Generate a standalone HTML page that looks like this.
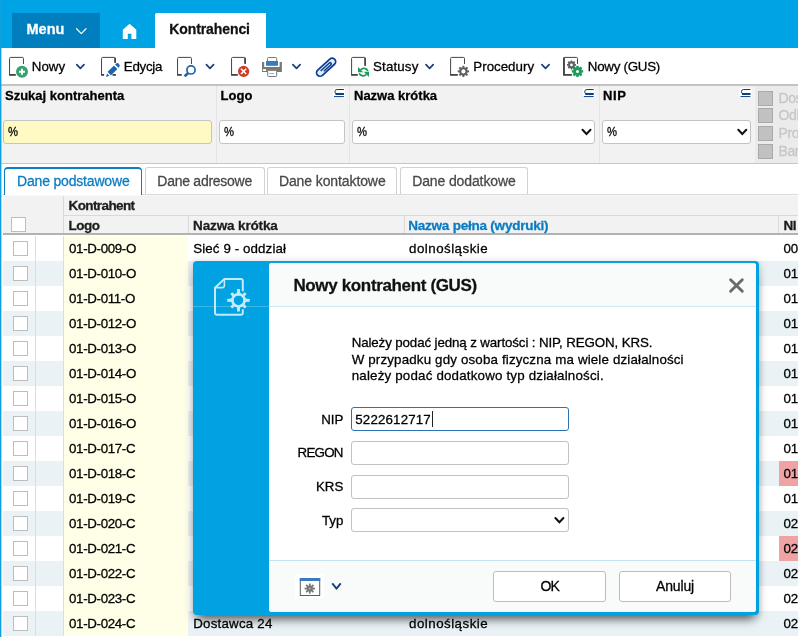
<!DOCTYPE html>
<html>
<head>
<meta charset="utf-8">
<title>Kontrahenci</title>
<style>
html,body{margin:0;padding:0;}
body{width:798px;height:637px;overflow:hidden;background:#fff;font-family:"Liberation Sans",sans-serif;font-size:13.33px;color:#000;position:relative;}
*{box-sizing:border-box;}
#wrap{position:absolute;left:0;top:0;width:798px;height:637px;overflow:hidden;will-change:transform;}
.abs{position:absolute;}
.t{position:absolute;white-space:nowrap;line-height:1;-webkit-text-stroke:0.28px currentColor;}
svg{position:absolute;overflow:visible;}
/* top bar */
#topbar{left:0;top:0;width:798px;height:47.5px;background:#00a3e3;}
#leftedge{left:0;top:0;width:2px;height:637px;background:linear-gradient(90deg,#10a0e0 0,#10a0e0 1px,rgba(16,160,224,0.4) 1px,rgba(16,160,224,0.4) 2px);}
#menu{left:12px;top:13px;width:88px;height:34.5px;background:#007ebe;}
#tab{left:155px;top:13px;width:110.5px;height:35px;background:#fff;border-radius:2px 0 0 0;}
.tl{font-size:13.33px;top:60.3px;color:#000;}
/* toolbar */
#tbline{left:1px;top:84px;width:797px;height:2px;background:#c3c3c3;}
/* filter */
#filter{left:1px;top:86px;width:797px;height:77px;background:#f2f2f2;}
#filterR{left:755.3px;top:86px;width:43px;height:77px;background:#ebebeb;}
#filterline{left:1px;top:163px;width:797px;height:1px;background:#c6c6c6;}
.fsep{position:absolute;top:86px;width:1px;height:77px;background:#e4e4e4;}
.finp{position:absolute;top:120px;height:24px;border:1px solid #c4c4c4;border-radius:3px;background:#fff;}
.flab{font-weight:bold;font-size:13px;top:88.8px;color:#000;}
.fval{font-size:12.5px;top:126px;color:#000;transform:scaleX(0.9);transform-origin:0 0;}
.gcb{position:absolute;left:758px;width:15px;height:14.8px;background:#c1c1c1;border:1px solid #a9a9a9;}
.glab{font-size:14px;color:#c6c6c6;left:778.5px;letter-spacing:-0.4px;}
/* tabs */
.tb{position:absolute;top:167px;height:27px;border:1px solid #d2d2d2;border-bottom:none;border-radius:3px 3px 0 0;background:#fff;}
.tbt{font-size:14px;top:174.3px;color:#484848;}
#tabline{left:3px;top:194px;width:795px;height:1px;background:#d9d9d9;}
#tabline2{left:3px;top:195px;width:795px;height:1px;background:#f8f8f8;}
/* table */
#thead{left:3px;top:196px;width:795px;height:37.2px;background:#f2f2f2;}
#theadline{left:3px;top:233px;width:795px;height:1.8px;background:#b2b2b2;}
.th{font-weight:bold;font-size:13.5px;color:#1c1c1c;}
.hs{position:absolute;width:1px;background:#d9d9d9;}
.row{position:absolute;left:3px;width:795px;height:25px;}
.row.alt{background:#eaf2f6;}
.cb{position:absolute;width:15px;height:15px;border:1px solid #bdbdbd;background:#fff;}
.vs{position:absolute;top:0;width:1px;height:25px;background:#cfe0f2;}
.ylw{position:absolute;left:61px;top:0;width:124px;height:25px;background:#fffee6;}
.pink{position:absolute;left:775.6px;top:0;width:20px;height:25px;background:#f0a3a5;}
.c{position:absolute;white-space:nowrap;line-height:1;-webkit-text-stroke:0.28px currentColor;top:6.3px;font-size:13.33px;color:#000;}
/* dialog */
#dlg{left:193px;top:260.5px;width:565.7px;height:354.3px;background:#00a2e1;border-radius:4px;box-shadow:0 2px 9px 0 rgba(0,0,0,0.26),0 9px 10px -5px rgba(0,0,0,0.55);}
#dlgin{left:75.5px;top:2px;width:487.4px;height:349.2px;background:#fff;border-radius:3px;overflow:hidden;}
#dtitle{left:0;top:0;width:100%;height:43.2px;background:#f9fbfb;}
#dtline{left:0;top:45px;width:563px;height:1px;background:rgba(255,255,255,0.22);}
#dtline2{left:0;top:43px;width:100%;height:1px;background:#bfe0f2;}
#dfoot{left:0;bottom:0;width:100%;height:51.5px;background:#f9fbfb;border-top:1px solid #c4e2f2;}
.dinp{position:absolute;left:82.3px;width:218.2px;height:24px;border:1px solid #c2c2c2;border-radius:3px;background:#fff;}
.dlab{font-size:13.33px;color:#000;}
.dtx{font-size:13.33px;color:#000;left:83.2px;}
.btn{position:absolute;top:308.5px;width:112.4px;height:30.5px;border:1px solid #bcbcbc;border-radius:3px;background:#fff;}

</style>
</head>
<body>
<div id="wrap">
<div class="abs" id="topbar"></div>
<div class="abs" id="menu"></div>
<div class="abs" id="tab"></div>
<div class="t" style="left:26.5px;top:22px;font-size:14.5px;font-weight:bold;color:#fff;letter-spacing:0px">Menu</div>
<div class="t" style="left:169.3px;top:22.4px;font-size:14px;font-weight:bold;color:#111;letter-spacing:-0.1px">Kontrahenci</div>

<div class="t tl" style="left:31.8px;">Nowy</div>
<div class="t tl" style="left:123.8px;letter-spacing:-0.28px">Edycja</div>
<div class="t tl" style="left:373px;letter-spacing:0.15px">Statusy</div>
<div class="t tl" style="left:473.3px;">Procedury</div>
<div class="t tl" style="left:587.8px;letter-spacing:-0.26px">Nowy (GUS)</div>
<div class="abs" id="tbline"></div>

<div class="abs" id="filter"></div>
<div class="abs" id="filterR"></div>
<div class="fsep" style="left:216.3px"></div>
<div class="fsep" style="left:349.4px"></div>
<div class="fsep" style="left:598.8px"></div>
<div class="abs" id="filterline"></div>
<div class="t flab" style="left:5px;">Szukaj kontrahenta</div>
<div class="t flab" style="left:220.6px;">Logo</div>
<div class="t flab" style="left:354px;">Nazwa krótka</div>
<div class="t flab" style="left:603px;letter-spacing:0.6px">NIP</div>
<div class="finp" style="left:3.4px;width:209px;background:#fff9c4;"></div>
<div class="finp" style="left:219.2px;width:125.5px;"></div>
<div class="finp" style="left:352px;width:243px;"></div>
<div class="finp" style="left:602.4px;width:149px;"></div>
<div class="t fval" style="left:8px;">%</div>
<div class="t fval" style="left:223.6px;">%</div>
<div class="t fval" style="left:356.5px;">%</div>
<div class="t fval" style="left:606.8px;">%</div>
<div class="gcb" style="top:91px"></div>
<div class="gcb" style="top:108px"></div>
<div class="gcb" style="top:126.2px"></div>
<div class="gcb" style="top:144px"></div>
<div class="t glab" style="top:90.5px">Dos</div>
<div class="t glab" style="top:108.2px">Odl</div>
<div class="t glab" style="top:126px">Pro</div>
<div class="t glab" style="top:143.8px">Bar</div>

<div class="abs" id="tabline"></div>
<div class="abs" id="tabline2"></div>
<div class="tb" style="left:4px;width:138px;top:167px;height:28px;border:1px solid #0c7ec4;border-top:2px solid #0c7ec4;border-bottom:none;border-radius:4px 4px 0 0;"></div>
<div class="tb" style="left:145px;width:120px;"></div>
<div class="tb" style="left:267px;width:130px;"></div>
<div class="tb" style="left:400px;width:128px;"></div>
<div class="t tbt" style="left:17px;color:#0b7cc2;letter-spacing:-0.18px">Dane podstawowe</div>
<div class="t tbt" style="left:157.3px;letter-spacing:-0.26px">Dane adresowe</div>
<div class="t tbt" style="left:278.9px;letter-spacing:-0.1px">Dane kontaktowe</div>
<div class="t tbt" style="left:412.2px;letter-spacing:-0.12px">Dane dodatkowe</div>

<div class="abs" id="thead"></div>
<div class="abs" id="theadline"></div>
<div class="hs" style="left:63px;top:196px;height:37px"></div>
<div class="hs" style="left:63px;top:215.3px;width:735px;height:1px"></div>
<div class="hs" style="left:188px;top:216px;height:17px"></div>
<div class="hs" style="left:403.5px;top:216px;height:17px"></div>
<div class="hs" style="left:778px;top:216px;height:17px"></div>
<div class="cb" style="left:11px;top:216.8px;"></div>
<div class="t th" style="left:68.5px;top:198.9px;letter-spacing:-0.6px">Kontrahent</div>
<div class="t th" style="left:68.6px;top:218.7px;letter-spacing:-0.55px">Logo</div>
<div class="t th" style="left:193.1px;top:218.7px;letter-spacing:-0.14px">Nazwa krótka</div>
<div class="t th" style="left:408.2px;top:218.7px;letter-spacing:-0.22px;color:#0b7cc2">Nazwa pełna (wydruki)</div>
<div class="t th" style="left:783.4px;top:218.7px;letter-spacing:-0.3px">NI</div>

<div id="rows">
<div class="row" style="top:235.7px"><div class="cb" style="left:10.2px;top:5.2px"></div><div class="vs" style="left:32px"></div><div class="vs" style="left:60px"></div><div class="ylw"></div><div class="c" style="left:66px;letter-spacing:-0.34px">01-D-009-O</div><div class="c" style="left:190.3px;letter-spacing:0.1px">Sieć 9 - oddział</div><div class="c" style="left:406.1px;letter-spacing:0.47px">dolnośląskie</div><div class="c" style="left:780.6px;letter-spacing:-0.3px">00</div></div>
<div class="row alt" style="top:260.7px"><div class="cb" style="left:10.2px;top:5.2px"></div><div class="vs" style="left:32px"></div><div class="vs" style="left:60px"></div><div class="ylw"></div><div class="c" style="left:66px;letter-spacing:-0.34px">01-D-010-O</div><div class="c" style="left:780.6px;letter-spacing:-0.3px">01</div></div>
<div class="row" style="top:285.7px"><div class="cb" style="left:10.2px;top:5.2px"></div><div class="vs" style="left:32px"></div><div class="vs" style="left:60px"></div><div class="ylw"></div><div class="c" style="left:66px;letter-spacing:-0.34px">01-D-011-O</div><div class="c" style="left:780.6px;letter-spacing:-0.3px">01</div></div>
<div class="row alt" style="top:310.7px"><div class="cb" style="left:10.2px;top:5.2px"></div><div class="vs" style="left:32px"></div><div class="vs" style="left:60px"></div><div class="ylw"></div><div class="c" style="left:66px;letter-spacing:-0.34px">01-D-012-O</div><div class="c" style="left:780.6px;letter-spacing:-0.3px">01</div></div>
<div class="row" style="top:335.7px"><div class="cb" style="left:10.2px;top:5.2px"></div><div class="vs" style="left:32px"></div><div class="vs" style="left:60px"></div><div class="ylw"></div><div class="c" style="left:66px;letter-spacing:-0.34px">01-D-013-O</div><div class="c" style="left:780.6px;letter-spacing:-0.3px">01</div></div>
<div class="row alt" style="top:360.7px"><div class="cb" style="left:10.2px;top:5.2px"></div><div class="vs" style="left:32px"></div><div class="vs" style="left:60px"></div><div class="ylw"></div><div class="c" style="left:66px;letter-spacing:-0.34px">01-D-014-O</div><div class="c" style="left:780.6px;letter-spacing:-0.3px">01</div></div>
<div class="row" style="top:385.7px"><div class="cb" style="left:10.2px;top:5.2px"></div><div class="vs" style="left:32px"></div><div class="vs" style="left:60px"></div><div class="ylw"></div><div class="c" style="left:66px;letter-spacing:-0.34px">01-D-015-O</div><div class="c" style="left:780.6px;letter-spacing:-0.3px">01</div></div>
<div class="row alt" style="top:410.7px"><div class="cb" style="left:10.2px;top:5.2px"></div><div class="vs" style="left:32px"></div><div class="vs" style="left:60px"></div><div class="ylw"></div><div class="c" style="left:66px;letter-spacing:-0.34px">01-D-016-O</div><div class="c" style="left:780.6px;letter-spacing:-0.3px">01</div></div>
<div class="row" style="top:435.7px"><div class="cb" style="left:10.2px;top:5.2px"></div><div class="vs" style="left:32px"></div><div class="vs" style="left:60px"></div><div class="ylw"></div><div class="c" style="left:66px;letter-spacing:-0.34px">01-D-017-C</div><div class="c" style="left:780.6px;letter-spacing:-0.3px">01</div></div>
<div class="row alt" style="top:460.7px"><div class="cb" style="left:10.2px;top:5.2px"></div><div class="vs" style="left:32px"></div><div class="vs" style="left:60px"></div><div class="ylw"></div><div class="c" style="left:66px;letter-spacing:-0.34px">01-D-018-C</div><div class="pink"></div><div class="c" style="left:780.6px;letter-spacing:-0.3px">01</div></div>
<div class="row" style="top:485.7px"><div class="cb" style="left:10.2px;top:5.2px"></div><div class="vs" style="left:32px"></div><div class="vs" style="left:60px"></div><div class="ylw"></div><div class="c" style="left:66px;letter-spacing:-0.34px">01-D-019-C</div><div class="c" style="left:780.6px;letter-spacing:-0.3px">01</div></div>
<div class="row alt" style="top:510.7px"><div class="cb" style="left:10.2px;top:5.2px"></div><div class="vs" style="left:32px"></div><div class="vs" style="left:60px"></div><div class="ylw"></div><div class="c" style="left:66px;letter-spacing:-0.34px">01-D-020-C</div><div class="c" style="left:780.6px;letter-spacing:-0.3px">02</div></div>
<div class="row" style="top:535.7px"><div class="cb" style="left:10.2px;top:5.2px"></div><div class="vs" style="left:32px"></div><div class="vs" style="left:60px"></div><div class="ylw"></div><div class="c" style="left:66px;letter-spacing:-0.34px">01-D-021-C</div><div class="pink"></div><div class="c" style="left:780.6px;letter-spacing:-0.3px">02</div></div>
<div class="row alt" style="top:560.7px"><div class="cb" style="left:10.2px;top:5.2px"></div><div class="vs" style="left:32px"></div><div class="vs" style="left:60px"></div><div class="ylw"></div><div class="c" style="left:66px;letter-spacing:-0.34px">01-D-022-C</div><div class="c" style="left:780.6px;letter-spacing:-0.3px">02</div></div>
<div class="row" style="top:585.7px"><div class="cb" style="left:10.2px;top:5.2px"></div><div class="vs" style="left:32px"></div><div class="vs" style="left:60px"></div><div class="ylw"></div><div class="c" style="left:66px;letter-spacing:-0.34px">01-D-023-C</div><div class="c" style="left:780.6px;letter-spacing:-0.3px">02</div></div>
<div class="row alt" style="top:610.7px"><div class="cb" style="left:10.2px;top:5.2px"></div><div class="vs" style="left:32px"></div><div class="vs" style="left:60px"></div><div class="ylw"></div><div class="c" style="left:66px;letter-spacing:-0.34px">01-D-024-C</div><div class="c" style="left:190.3px;letter-spacing:0.2px">Dostawca 24</div><div class="c" style="left:406.1px;letter-spacing:0.47px">dolnośląskie</div><div class="c" style="left:780.6px;letter-spacing:-0.3px">02</div></div>
</div>
<div class="abs" id="dlg">
  <div class="abs" id="dlgin">
    <div class="abs" id="dtitle"></div>
    <div class="abs" id="dfoot"></div>
    <div class="abs" id="dtline2"></div>
    <div class="t" style="left:24.9px;top:14.5px;font-size:17px;font-weight:bold;letter-spacing:-0.35px;color:#111">Nowy kontrahent (GUS)</div>
    <div class="t dtx" style="top:73px;letter-spacing:-0.12px">Należy podać jedną z wartości : NIP, REGON, KRS.</div>
    <div class="t dtx" style="top:90.3px;letter-spacing:0.16px">W przypadku gdy osoba fizyczna ma wiele działalności</div>
    <div class="t dtx" style="top:106.4px;letter-spacing:0.19px">należy podać dodatkowo typ działalności.</div>
    <div class="dinp" style="top:144.5px;border:1.5px solid #2a74b4;"></div>
    <div class="dinp" style="top:178.5px;"></div>
    <div class="dinp" style="top:212px;"></div>
    <div class="dinp" style="top:245.5px;"></div>
    <div class="t dlab" style="right:412.5px;top:150.2px;">NIP</div>
    <div class="t dlab" style="right:413.2px;top:183.7px;letter-spacing:-0.75px">REGON</div>
    <div class="t dlab" style="right:412.5px;top:217.3px;">KRS</div>
    <div class="t dlab" style="right:412.5px;top:251.3px;">Typ</div>
    <div class="t" style="left:86.8px;top:150.2px;font-size:13.33px;letter-spacing:0.15px">5222612717</div>
    <div class="abs" style="left:163.2px;top:148.5px;width:1px;height:16px;background:#222"></div>
    <div class="btn" style="left:224.8px;"></div>
    <div class="btn" style="left:350.1px;"></div>
    <div class="t" style="left:272px;top:316.6px;font-size:14px;letter-spacing:-0.8px">OK</div>
    <div class="t" style="left:387.5px;top:316.6px;font-size:14px;letter-spacing:-0.15px">Anuluj</div>
  </div>
  <div class="abs" id="dtline"></div>
</div>

<svg width="798" height="637" viewBox="0 0 798 637" style="left:0;top:0;pointer-events:none">
<path d="M76.6 28.7 L81.3 33.6 L86 28.7" fill="none" stroke="#fff" stroke-width="1.25" stroke-linecap="round" stroke-linejoin="round" opacity="0.95"/>
<path d="M129.6 23.7 L136.3 29.8 V38.9 H131.4 V33.8 H127.8 V38.9 H122.8 V29.8 Z" fill="#fff"/>
<path d="M23.46 64 V58.4 Q23.46 57.4 22.46 57.4 H10.56 Q9.56 57.4 9.56 58.4 V75" fill="none" stroke="#444" stroke-width="1"/>
<path d="M9.06 74.9 H15.8" stroke="#444" stroke-width="1.8" fill="none"/>
<circle cx="22" cy="71.7" r="6" fill="#35a273"/>
<path d="M19 71.7 H25 M22 68.7 V74.7" stroke="#fff" stroke-width="1.9" fill="none"/>
<path d="M76.80 64.60 L80.40 68.40 L84.00 64.60" fill="none" stroke="#1b3f7c" stroke-width="1.7" stroke-linecap="round" stroke-linejoin="round"/>
<path d="M115.46 62.8 V58.4 Q115.46 57.4 114.46 57.4 H102.56 Q101.56 57.4 101.56 58.4 V75" fill="none" stroke="#444" stroke-width="1"/>
<path d="M101.06 74.9 H104.1" stroke="#444" stroke-width="1.8" fill="none"/>
<path d="M115.06 58 V62.8" stroke="#444" stroke-width="1.8" fill="none"/>
<path d="M112.5 74.9 H115.9" stroke="#444" stroke-width="1.8"/>
<g transform="translate(106 76.9) rotate(-45)" fill="#1d63af"><path d="M0 0 L3.2 -1.7 V1.7 Z"/><rect x="4.6" y="-2.4" width="9" height="4.8" rx="0.6"/><path d="M15.2 -2.4 H16 A2.4 2.4 0 0 1 16 2.4 H15.2 Z" /></g>
<path d="M191.46 64 V58.4 Q191.46 57.4 190.46 57.4 H178.56 Q177.56 57.4 177.56 58.4 V75" fill="none" stroke="#444" stroke-width="1"/>
<path d="M177.06 74.9 H181.75" stroke="#444" stroke-width="1.8" fill="none"/>
<circle cx="191" cy="69.9" r="4.1" fill="none" stroke="#1d63af" stroke-width="1.7"/>
<path d="M187.9 73.2 L184.6 76.4" stroke="#1d63af" stroke-width="2.6" fill="none"/>
<path d="M206.40 64.60 L210.00 68.40 L213.60 64.60" fill="none" stroke="#1b3f7c" stroke-width="1.7" stroke-linecap="round" stroke-linejoin="round"/>
<path d="M245.46 63.8 V58.4 Q245.46 57.4 244.46 57.4 H232.56 Q231.56 57.4 231.56 58.4 V75" fill="none" stroke="#444" stroke-width="1"/>
<path d="M231.06 74.9 H237.8" stroke="#444" stroke-width="1.8" fill="none"/>
<path d="M245.06 58 V63.8" stroke="#444" stroke-width="1.8" fill="none"/>
<circle cx="243.6" cy="71.4" r="5.6" fill="#cd3d25"/>
<path d="M241 68.8 L246.2 74 M246.2 68.8 L241 74" stroke="#fff" stroke-width="1.6" fill="none"/>
<rect x="267.5" y="57.5" width="9.2" height="6" rx="1" fill="#fff" stroke="#787878" stroke-width="1"/>
<path d="M262 62 H264.2 V67 H279.6 V62 H281.9 V72 H262 Z" fill="#787878"/>
<rect x="266" y="61" width="12" height="4.8" fill="#3b79ba"/>
<rect x="262.9" y="69.1" width="3.1" height="1.9" fill="#fff"/>
<rect x="267.7" y="70.3" width="9" height="6.2" rx="0.8" fill="#fff" stroke="#787878" stroke-width="1"/>
<path d="M269.2 73.5 H274" stroke="#8caad4" stroke-width="0.9"/>
<path d="M292.90 64.60 L296.50 68.40 L300.10 64.60" fill="none" stroke="#1b3f7c" stroke-width="1.7" stroke-linecap="round" stroke-linejoin="round"/>
<g transform="translate(326.1 67.2) rotate(-42.5)" fill="none" stroke="#0c3d95" stroke-width="1.75"><rect x="-11.7" y="-3.5" width="23.4" height="7" rx="3.5" fill="#e4eef7"/><path d="M-6.6 -0.9 H5.2 A1.15 1.15 0 0 1 5.2 1.4 H-4.4" stroke-width="1.55"/></g>
<path d="M365.50 65.8 V58.4 Q365.50 57.4 364.50 57.4 H352.60 Q351.60 57.4 351.60 58.4 V75" fill="none" stroke="#444" stroke-width="1"/>
<path d="M351.10 74.9 H357.8" stroke="#444" stroke-width="1.8" fill="none"/>
<path d="M365.10 58 V65.8" stroke="#444" stroke-width="1.8" fill="none"/>
<path d="M358 67 V72.2 H363.2 Z" fill="#1b9b5c"/>
<path d="M360.6 69.8 A4.4 4.4 0 0 1 367.9 71" fill="none" stroke="#1b9b5c" stroke-width="1.8"/>
<path d="M369 77 V71.8 H363.8 Z" fill="#1b9b5c"/>
<path d="M366.4 74.2 A4.4 4.4 0 0 1 359.1 73.4" fill="none" stroke="#1b9b5c" stroke-width="1.8"/>
<path d="M426.00 64.60 L429.60 68.40 L433.20 64.60" fill="none" stroke="#1b3f7c" stroke-width="1.7" stroke-linecap="round" stroke-linejoin="round"/>
<path d="M464.50 64 V58.4 Q464.50 57.4 463.50 57.4 H451.60 Q450.60 57.4 450.60 58.4 V75" fill="none" stroke="#444" stroke-width="1"/>
<path d="M450.10 74.9 H457.8" stroke="#444" stroke-width="1.8" fill="none"/>
<path d="M467.00 70.25 L469.10 70.48 L469.10 72.32 L467.00 72.55Z M466.76 73.13 L468.08 74.78 L466.78 76.08 L465.13 74.76Z M464.55 75.00 L464.32 77.10 L462.48 77.10 L462.25 75.00Z M461.67 74.76 L460.02 76.08 L458.72 74.78 L460.04 73.13Z M459.80 72.55 L457.70 72.32 L457.70 70.48 L459.80 70.25Z M460.04 69.67 L458.72 68.02 L460.02 66.72 L461.67 68.04Z M462.25 67.80 L462.48 65.70 L464.32 65.70 L464.55 67.80Z M465.13 68.04 L466.78 66.72 L468.08 68.02 L466.76 69.67Z " fill="#5e5e5e"/>
<circle cx="463.4" cy="71.4" r="3.15" fill="none" stroke="#5e5e5e" stroke-width="2.10"/>
<path d="M541.90 64.60 L545.50 68.40 L549.10 64.60" fill="none" stroke="#1b3f7c" stroke-width="1.7" stroke-linecap="round" stroke-linejoin="round"/>
<path d="M577.50 64 V58.4 Q577.50 57.4 576.50 57.4 H564.60 Q563.60 57.4 563.60 58.4 V75" fill="none" stroke="#444" stroke-width="1"/>
<path d="M563.10 74.9 H571.9" stroke="#444" stroke-width="1.8" fill="none"/>
<path d="M564.00 57.6 V75" stroke="#444" stroke-width="1.8" fill="none"/>
<path d="M574.20 63.85 L576.00 64.06 L576.00 65.74 L574.20 65.95Z M574.15 66.07 L575.28 67.49 L574.09 68.68 L572.67 67.55Z M572.55 67.60 L572.34 69.40 L570.66 69.40 L570.45 67.60Z M570.33 67.55 L568.91 68.68 L567.72 67.49 L568.85 66.07Z M568.80 65.95 L567.00 65.74 L567.00 64.06 L568.80 63.85Z M568.85 63.73 L567.72 62.31 L568.91 61.12 L570.33 62.25Z M570.45 62.20 L570.66 60.40 L572.34 60.40 L572.55 62.20Z M572.67 62.25 L574.09 61.12 L575.28 62.31 L574.15 63.73Z " fill="#606060"/>
<circle cx="571.5" cy="64.9" r="2.35" fill="none" stroke="#606060" stroke-width="1.90"/>
<path d="M581.30 70.00 L583.20 70.28 L583.20 72.52 L581.30 72.80Z M581.18 73.10 L582.32 74.64 L580.74 76.22 L579.20 75.08Z M578.90 75.20 L578.62 77.10 L576.38 77.10 L576.10 75.20Z M575.80 75.08 L574.26 76.22 L572.68 74.64 L573.82 73.10Z M573.70 72.80 L571.80 72.52 L571.80 70.28 L573.70 70.00Z M573.82 69.70 L572.68 68.16 L574.26 66.58 L575.80 67.72Z M576.10 67.60 L576.38 65.70 L578.62 65.70 L578.90 67.60Z M579.20 67.72 L580.74 66.58 L582.32 68.16 L581.18 69.70Z " fill="#1b9b5c"/>
<circle cx="577.5" cy="71.4" r="2.95" fill="none" stroke="#1b9b5c" stroke-width="2.90"/>
<rect x="333.0" y="88" width="12" height="10" rx="1.5" fill="#fff" opacity="0.85"/>
<path d="M343.9 89.5 H337.1 A2.2 2.2 0 0 0 337.1 93.9 H343.9" fill="none" stroke="#063c7c" stroke-width="1"/>
<path d="M335.5 94 H343.9" stroke="#063c7c" stroke-width="1.9"/>
<path d="M334.0 96.6 H343.9" stroke="#063c7c" stroke-width="1"/>
<rect x="582.8" y="88" width="12" height="10" rx="1.5" fill="#fff" opacity="0.85"/>
<path d="M593.7 89.5 H586.9 A2.2 2.2 0 0 0 586.9 93.9 H593.7" fill="none" stroke="#063c7c" stroke-width="1"/>
<path d="M585.3 94 H593.7" stroke="#063c7c" stroke-width="1.9"/>
<path d="M583.8 96.6 H593.7" stroke="#063c7c" stroke-width="1"/>
<rect x="739.5" y="88" width="12" height="10" rx="1.5" fill="#fff" opacity="0.85"/>
<path d="M750.4 89.5 H743.6 A2.2 2.2 0 0 0 743.6 93.9 H750.4" fill="none" stroke="#063c7c" stroke-width="1"/>
<path d="M742.0 94 H750.4" stroke="#063c7c" stroke-width="1.9"/>
<path d="M740.5 96.6 H750.4" stroke="#063c7c" stroke-width="1"/>
<path d="M582.5 129.7 L586.5 134.0 L590.5 129.7" fill="none" stroke="#111" stroke-width="2" stroke-linecap="round" stroke-linejoin="miter"/>
<path d="M738.3 129.7 L742.3 134.0 L746.3 129.7" fill="none" stroke="#111" stroke-width="2" stroke-linecap="round" stroke-linejoin="miter"/>
<path d="M555.4 518.0 L559.4 522.3 L563.4 518.0" fill="none" stroke="#111" stroke-width="2" stroke-linecap="round" stroke-linejoin="miter"/>
<path d="M242.8 291.2 V281 Q242.8 279 240.8 279 H224.4 L215 287.8 V312.7 Q215 314.7 217 314.7 H240.8 Q242.8 314.7 242.8 312.7 V309.3" fill="none" stroke="#c6e9f8" stroke-width="2" stroke-linejoin="round"/>
<path d="M224.4 279.5 V285.6 Q224.4 287.6 222.4 287.6 H215.5" fill="none" stroke="#c6e9f8" stroke-width="1.6"/>
<path d="M245.20 298.60 L249.80 298.94 L249.80 301.66 L245.20 302.00Z M240.20 307.00 L239.86 311.60 L237.14 311.60 L236.80 307.00Z M231.80 302.00 L227.20 301.66 L227.20 298.94 L231.80 298.60Z M236.80 293.60 L237.14 289.00 L239.86 289.00 L240.20 293.60Z " fill="#c6e9f8"/>
<circle cx="238.5" cy="300.3" r="6.10" fill="none" stroke="#c6e9f8" stroke-width="2.40"/>
<path d="M244.37 303.91 L246.62 306.61 L244.81 308.42 L242.11 306.17Z M234.89 306.17 L232.19 308.42 L230.38 306.61 L232.63 303.91Z M232.63 296.69 L230.38 293.99 L232.19 292.18 L234.89 294.43Z M242.11 294.43 L244.81 292.18 L246.62 293.99 L244.37 296.69Z " fill="#c6e9f8"/>
<circle cx="238.5" cy="300.3" r="6.10" fill="none" stroke="#c6e9f8" stroke-width="2.40"/>
<path d="M730.6 279.7 L742.3 291.3 M742.3 279.7 L730.6 291.3" stroke="#6a6a6a" stroke-width="2.9" stroke-linecap="round" fill="none"/>
<rect x="295" y="574" width="29" height="24" fill="#fff"/>
<rect x="300.3" y="578.5" width="19.4" height="17" fill="#fff" stroke="#5c5c5c" stroke-width="1"/>
<rect x="299.8" y="578" width="20.4" height="3" fill="#3b79c0"/>
<path d="M312.20 587.60 L315.00 587.80 L315.00 589.40 L312.20 589.60Z M312.20 589.59 L314.04 591.71 L312.91 592.84 L310.79 591.00Z M310.80 591.00 L310.60 593.80 L309.00 593.80 L308.80 591.00Z M308.81 591.00 L306.69 592.84 L305.56 591.71 L307.40 589.59Z M307.40 589.60 L304.60 589.40 L304.60 587.80 L307.40 587.60Z M307.40 587.61 L305.56 585.49 L306.69 584.36 L308.81 586.20Z M308.80 586.20 L309.00 583.40 L310.60 583.40 L310.80 586.20Z M310.79 586.20 L312.91 584.36 L314.04 585.49 L312.20 587.61Z " fill="#787878"/>
<circle cx="309.8" cy="588.6" r="1.85" fill="none" stroke="#787878" stroke-width="2.30"/>
<path d="M332.70 583.90 L336.50 588.70 L340.30 583.90" fill="none" stroke="#143f7c" stroke-width="1.9" stroke-linecap="round" stroke-linejoin="round"/>
</svg>
<div class="abs" id="leftedge"></div>
</div>
</body>
</html>
